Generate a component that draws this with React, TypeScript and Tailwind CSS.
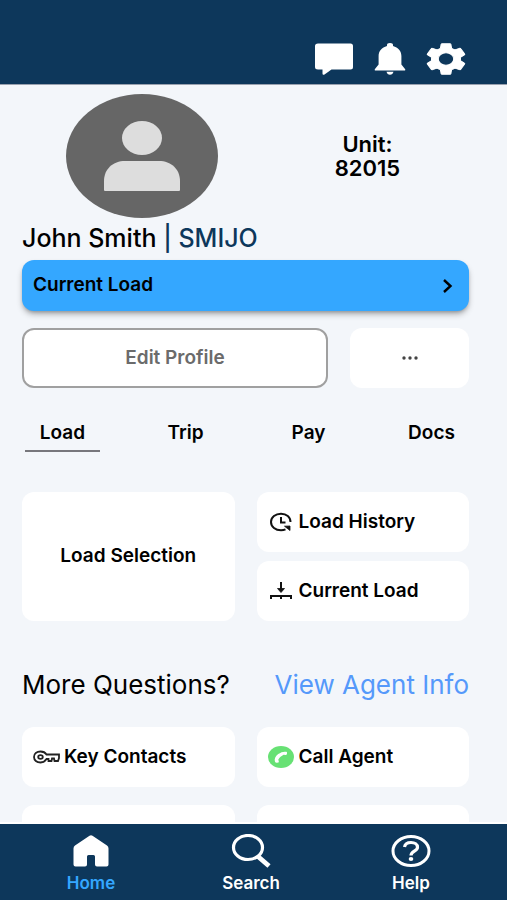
import { useState } from 'react';
import type { ReactNode } from 'react';

const TABS = ['Load', 'Trip', 'Pay', 'Docs'];

const ChatIcon = () => (
  <svg className="h-8 w-10" viewBox="0 0 40 32" fill="#fff" aria-hidden="true">
    <path d="M4 .5h32.500q2.500 0 2.500 2.500v21q0 2.500-2.500 2.500H17.500L10.500 31.500q-2 1-2-1v-4H4q-3 0-3-2.500V3Q1 .5 4 .5Z" />
  </svg>
);

const BellIcon = () => (
  <svg className="h-8 w-8" viewBox="0 0 32 32" fill="#fff" aria-hidden="true">
    <path d="M16 0a3 2.600 0 0 1 3 2.900c5.200 1.500 8.400 5 8.400 10.100v8.500l3.600 4.500q1 1.600-1 1.600H2q-2 0-1-1.600l3.600-4.500V13C4.600 7.900 7.800 4.400 13 2.900A3 2.600 0 0 1 16 0Z" />
    <path d="M12.500 28.800h7q-.8 3-3.500 3t-3.500-3Z" />
  </svg>
);

const GearIcon = () => (
  <svg className="h-8 w-10" viewBox="2 2 20 20" preserveAspectRatio="none" fill="#fff" aria-hidden="true">
    <path
      stroke="#fff"
      strokeWidth=".6"
      strokeLinejoin="round"
      d="M19.140 12.940c.04-.3.060-.610.060-.940 0-.320-.020-.640-.070-.940l2.030-1.580c.180-.140.230-.410.120-.610l-1.920-3.320c-.120-.220-.370-.290-.590-.220l-2.390.960c-.5-.380-1.030-.7-1.620-.940l-.360-2.540c-.040-.240-.240-.410-.480-.410h-3.840c-.240 0-.430.170-.470.410l-.360 2.540c-.590.240-1.130.570-1.620.940l-2.390-.960c-.220-.080-.470 0-.590.220L2.740 8.870c-.120.210-.080.470.120.610l2.030 1.580c-.050.3-.090.630-.090.940s.020.640.070.940l-2.030 1.580c-.180.140-.230.410-.120.610l1.920 3.320c.120.220.370.290.590.220l2.390-.960c.5.380 1.030.7 1.620.940l.360 2.540c.050.240.240.410.480.410h3.840c.240 0 .440-.170.470-.410l.360-2.540c.590-.240 1.130-.560 1.620-.940l2.390.960c.220.080.470 0 .590-.220l1.920-3.320c.120-.220.070-.470-.120-.610l-2.010-1.580ZM12 15.900a3.900 3.900 0 1 1 0-7.800 3.900 3.900 0 0 1 0 7.800Z"
    />
  </svg>
);

const Avatar = () => (
  <svg className="h-[124px] w-[152px]" viewBox="0 0 152 124" role="img" aria-label="John Smith">
    <ellipse cx="76" cy="62" rx="76" ry="62" fill="#666" />
    <ellipse cx="76" cy="44" rx="20" ry="17" fill="#ddd" />
    <path d="M38 96V87c0-12 9-20 21-20h34c12 0 21 8 21 20v9q0 1-1 1H39q-1 0-1-1Z" fill="#ddd" />
  </svg>
);

const HistoryIcon = () => (
  <svg className="h-5 w-6" viewBox="0 0 24 20" fill="none" stroke="#111" strokeWidth="2" aria-hidden="true">
    <path d="M21.500 10C21.500 5 17.500 1.700 12 1.700S2 5.200 2 10s4.500 8.300 10 8.300c1.700 0 3.200-.3 4.500-.9" />
    <path d="M12 5v5.500h4.500" />
    <path d="M15.500 14.200l5.500-.2v4.500Z" fill="#111" strokeWidth=".8" />
  </svg>
);

const DropIcon = () => (
  <svg className="h-5 w-6" viewBox="0 0 24 20" fill="none" stroke="#111" strokeWidth="2" aria-hidden="true">
    <path d="M12 1v9" />
    <path d="m8.500 7.500 3.500 4 3.500-4Z" fill="#111" strokeWidth=".8" />
    <path d="M2 18v-3h20v3M12 15v3" />
  </svg>
);

const KeyIcon = () => (
  <svg className="h-4 w-7" viewBox="0 0 28 16" fill="none" stroke="#222" strokeWidth="1.800" aria-hidden="true">
    <path d="M14.500 5.500H27V9l-1 3h-3.500l-.5-2.500h-2l-.5 2.500h-3v-2h-2C13 12.300 11 13.500 8.500 13.500 4.700 13.500 2 11.200 2 8s2.700-5.500 6.500-5.500c2.500 0 4.800 1 6 3Z" />
    <ellipse cx="8.500" cy="8" rx="2.300" ry="1.900" />
  </svg>
);

const PhoneIcon = () => (
  <svg className="h-[22px] w-[26px]" viewBox="0 0 26 22" aria-hidden="true">
    <ellipse cx="13" cy="11" rx="13" ry="11" fill="#67e174" />
    <path
      d="M7 15.800c-1-2.500.3-5.500 3.200-7.700 2.700-2 5.600-2.800 8.100-2.300.8.200.9 1 .6 2.200-.2.700-.7 1-1.300.9l-1.800-.2c-.6 0-.9.200-1.300.7-1.700.9-3 2-3.800 3.500-.4.400-.5.700-.3 1.200l.4 1.300c.1.500-.1.900-.8 1.100-1.400.5-2.500.4-3-.7Z"
      fill="#fff"
    />
  </svg>
);

const HomeIcon = () => (
  <svg className="h-8 w-9" viewBox="0 0 36 32" fill="#fff" aria-hidden="true">
    <path d="M16.500.7Q18-.3 19.500.7L34 10.500q1.500 1 1.500 3V29.500q0 2-2 2H24q-2 0-2-2v-8q0-1.500-1.500-1.500h-5q-1.500 0-1.500 1.500v8q0 2-2 2H2.500q-2 0-2-2V13.500q0-2 1.500-3Z" />
  </svg>
);

const SearchIcon = () => (
  <svg className="h-[34px] w-10" viewBox="0 0 40 34" fill="none" stroke="#fff" aria-hidden="true">
    <ellipse cx="17" cy="13.500" rx="14.500" ry="12" strokeWidth="3.200" />
    <path d="m27 22.500 11 9.500" strokeWidth="4.800" />
  </svg>
);

const HelpIcon = () => (
  <svg className="h-8 w-10" viewBox="0 0 40 32" fill="none" stroke="#fff" strokeWidth="3" aria-hidden="true">
    <ellipse cx="20" cy="16" rx="18" ry="14.500" />
    <path d="M13.500 12C14 9.200 16.500 7.500 20 7.500c3.700 0 6.500 1.900 6.500 4.700 0 4-6.500 4-6.500 8.300" strokeWidth="3.200" />
    <ellipse cx="20" cy="24" rx="2.300" ry="1.900" fill="#fff" stroke="none" />
  </svg>
);

type CardProps = {
  icon?: ReactNode;
  text: string;
};

const Card = ({ icon, text }: CardProps) => (
  <button className="flex h-[60px] items-center gap-1 rounded-xl bg-white px-[10px] text-left whitespace-nowrap">
    <span className="flex w-7 shrink-0 justify-center">{icon}</span>
    {text}
  </button>
);

export default function App() {
  const [activeTab, setActiveTab] = useState('Load');

  return (
    <div className="flex h-screen flex-col bg-[#f3f6fa] font-['Inter',sans-serif] text-[19px] font-semibold text-black">
      <header className="flex h-[85px] shrink-0 items-end justify-end gap-5 border-b border-gray-400 bg-[#0d375b] pr-[41px] pb-[9px]">
        <button aria-label="Messages">
          <ChatIcon />
        </button>
        <button aria-label="Notifications">
          <BellIcon />
        </button>
        <button aria-label="Settings">
          <GearIcon />
        </button>
      </header>

      <main className="min-h-0 flex-1 overflow-y-auto pt-[9px] pr-[38px] pl-[22px] [scrollbar-width:none]">
        <div className="flex items-center pl-11">
          <Avatar />
          <p className="flex-1 pl-12 text-center text-[22px] leading-6">
            Unit:
            <br />
            82015
          </p>
        </div>

        <h1 className="mt-1 text-[25px] leading-8 font-medium">
          John Smith <span className="text-[#0d375b]">| SMIJO</span>
        </h1>

        <button className="mt-[6px] flex h-[51px] w-full items-center justify-between rounded-xl bg-[#34a7ff] pr-4 pl-[11px] shadow-md shadow-black/30">
          Current Load
          <svg className="h-4 w-3" viewBox="0 0 12 16" fill="none" stroke="#000" strokeWidth="2.400" aria-hidden="true">
            <path d="m3 2 6.500 6L3 14" />
          </svg>
        </button>

        <div className="mt-[17px] flex gap-[22px]">
          <button className="h-[60px] flex-1 rounded-xl border-2 border-[#a0a0a0] bg-white text-[#6b6b6b]">
            Edit Profile
          </button>
          <button className="flex h-[60px] w-[119px] items-center justify-center rounded-xl bg-white" aria-label="More">
            <svg className="h-1 w-4" viewBox="0 0 16 4" fill="#444" aria-hidden="true">
              <circle cx="2" cy="2" r="1.700" />
              <circle cx="8" cy="2" r="1.700" />
              <circle cx="14" cy="2" r="1.700" />
            </svg>
          </button>
        </div>

        <div className="mt-6 flex justify-between pl-[3px]" role="tablist">
          {TABS.map(tab => (
            <button
              key={tab}
              role="tab"
              aria-selected={tab === activeTab}
              onClick={() => setActiveTab(tab)}
              className={`h-10 w-[75px] border-b-2 pt-1 ${
                tab === activeTab ? 'border-[#77777c]' : 'border-transparent'
              }`}
            >
              {tab}
            </button>
          ))}
        </div>

        <div className="mt-10 grid grid-cols-2 gap-x-[22px]">
          <button className="rounded-xl bg-white">Load Selection</button>
          <div className="flex flex-col gap-[9px]">
            <Card icon={<HistoryIcon />} text="Load History" />
            <Card icon={<DropIcon />} text="Current Load" />
          </div>
        </div>

        <div className="mt-12 flex items-center justify-between text-[26px] leading-8 font-normal">
          <h2>More Questions?</h2>
          <a href="#agent" className="text-[#5599fa]">
            View Agent Info
          </a>
        </div>

        <div className="mt-[26px] grid grid-cols-2 gap-x-[22px] gap-y-[18px]">
          <Card icon={<KeyIcon />} text="Key Contacts" />
          <Card icon={<PhoneIcon />} text="Call Agent" />
          <div className="h-[60px] rounded-xl bg-white" />
          <div className="h-[60px] rounded-xl bg-white" />
        </div>
      </main>

      <nav className="flex h-[78px] shrink-0 justify-between border-t-2 border-white bg-[#0d375b] pt-[9px] pr-14 pl-[51px] text-[17px] leading-5 text-white">
        <a href="#home" className="flex w-20 flex-col items-center text-[#34a7ff]">
          <span className="flex h-9 items-center">
            <HomeIcon />
          </span>
          <span className="mt-1">Home</span>
        </a>
        <a href="#search" className="flex w-20 flex-col items-center">
          <span className="flex h-9 items-center">
            <SearchIcon />
          </span>
          <span className="mt-1">Search</span>
        </a>
        <a href="#help" className="flex w-20 flex-col items-center">
          <span className="flex h-9 items-center">
            <HelpIcon />
          </span>
          <span className="mt-1">Help</span>
        </a>
      </nav>
    </div>
  );
}
